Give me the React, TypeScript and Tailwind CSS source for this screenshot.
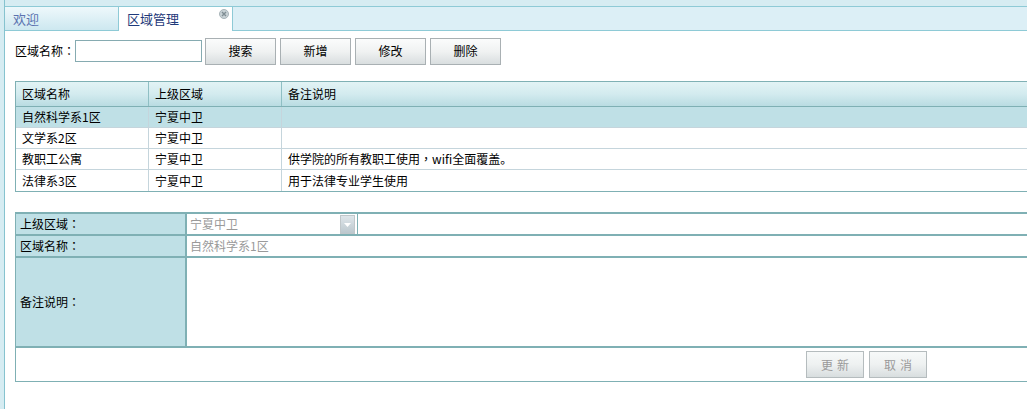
import React from "react";

const font = { fontFamily: '"Noto Sans CJK SC", "Noto Sans", sans-serif' };

function P({ c }: { c: string }) {
  return <span style={{ fontFamily: '"Noto Sans CJK TC", sans-serif' }}>{c}</span>;
}

function Btn({ label }: { label: string }) {
  return (
    <button className="w-[71px] h-[27px] border border-[#a9b0b3] bg-gradient-to-b from-[#fbfcfc] via-[#f0f2f2] to-[#d9dedf] text-[12px] text-black flex items-center justify-center">
      {label}
    </button>
  );
}

function DisBtn({ label }: { label: string }) {
  return (
    <button className="w-[58px] h-[27px] border border-[#b5bcbe] bg-gradient-to-b from-[#f7f9f9] via-[#eef1f1] to-[#d8dedf] text-[12px] text-[#9a9a9a] tracking-[4px] flex items-center justify-center pl-[4px]">
      {label}
    </button>
  );
}

const rows: { a: string; b: string; c: React.ReactNode; sel?: boolean }[] = [
  { a: "自然科学系1区", b: "宁夏中卫", c: "", sel: true },
  { a: "文学系2区", b: "宁夏中卫", c: "" },
  {
    a: "教职工公寓",
    b: "宁夏中卫",
    c: (
      <>
        供学院的所有教职工使用<P c="，" />wifi全面覆盖。
      </>
    ),
  },
  { a: "法律系3区", b: "宁夏中卫", c: "用于法律专业学生使用" },
];

export default function App() {
  return (
    <div className="w-[1027px] h-[409px] overflow-hidden flex bg-[#d6ecf2] text-[12px] text-black" style={font}>
      <div className="w-[4px] shrink-0 bg-[#d6ecf2]" />
      <div className="flex-1 flex flex-col border-l border-[#86c3cf] min-w-0">
        {/* tab bar */}
        <div className="h-[31px] pt-[6px] bg-[#d6ecf2] shrink-0">
          <div className="h-[25px] flex border-t border-[#8ecad6]">
            <div className="w-[114px] h-[24px] bg-gradient-to-b from-[#eef8fb] to-[#cde8f0] border-r border-b border-[#8ecad6] pl-[8px] flex items-center text-[13px] text-[#5b73b0]">
              欢迎
            </div>
            <div className="relative w-[114px] h-[24px] bg-white border-r border-[#8ecad6] pl-[8px] flex items-center text-[13px] text-[#1f3a7a]">
              区域管理
              <span className="absolute right-[3px] top-[2px] w-[10px] h-[10px] rounded-full bg-[#c9d2d6] border border-[#a8b4b9] flex items-center justify-center">
                <svg width="6" height="6" viewBox="0 0 6 6">
                  <path d="M1 1L5 5M5 1L1 5" stroke="#7f8d93" strokeWidth="1.4" />
                </svg>
              </span>
            </div>
            <div className="flex-1 h-[24px] bg-[#dceff6] border-b border-[#8ecad6]" />
          </div>
        </div>
        {/* content */}
        <div className="flex-1 bg-white pl-[10px] flex flex-col">
          <div className="mt-[7px] h-[26px] flex items-center">
            <span className="w-[60px] shrink-0 whitespace-nowrap">
              区域名称<P c="：" />
            </span>
            <input className="w-[127px] h-[22px] border border-[#86abb1] outline-none" />
            <div className="flex gap-[4px] ml-[3px]">
              <Btn label="搜索" />
              <Btn label="新增" />
              <Btn label="修改" />
              <Btn label="删除" />
            </div>
          </div>

          {/* table */}
          <div className="mt-[17px] w-[1030px] border border-[#7fb0b4]">
            <div className="h-[25px] flex border-b border-[#7fb0b4] bg-gradient-to-b from-[#e2f3f5] via-[#d3ebef] to-[#b9dce2]">
              <div className="w-[133px] border-r border-[#8fbfc4] pl-[6px] flex items-center">区域名称</div>
              <div className="w-[133px] border-r border-[#8fbfc4] pl-[6px] flex items-center">上级区域</div>
              <div className="flex-1 pl-[6px] flex items-center">备注说明</div>
            </div>
            {rows.map((r, i) => (
              <div
                key={i}
                className={`h-[21px] flex ${i < rows.length - 1 ? "border-b border-[#c5d5dc]" : ""} ${r.sel ? "bg-[#bfe0e6]" : "bg-white"}`}
              >
                <div className="w-[133px] border-r border-[#c5d5dc] pl-[6px] flex items-center">{r.a}</div>
                <div className="w-[133px] border-r border-[#c5d5dc] pl-[6px] flex items-center">{r.b}</div>
                <div className="flex-1 pl-[6px] flex items-center">{r.c}</div>
              </div>
            ))}
          </div>

          {/* form */}
          <div className="mt-[20px] w-[1030px] border-l border-b border-[#7fb0b4] border-t-2">
            <div className="flex h-[22px] border-b-2 border-[#7fb0b4]">
              <div className="w-[171px] bg-[#bfe0e6] border-r-2 border-[#7fb0b4] pl-[4px] flex items-center">
                上级区域<P c="：" />
              </div>
              <div className="w-[170px] flex items-center relative bg-white">
                <span className="pl-[3px] text-[#9a9a9a]">宁夏中卫</span>
                <span className="absolute right-[2px] top-[1px] w-[15px] h-[19px] border border-[#c0c7ca] bg-gradient-to-b from-[#dfe6ea] to-[#bcc8ce] flex items-center justify-center">
                  <svg width="7" height="4" viewBox="0 0 7 4">
                    <path d="M0 0H7L3.5 4Z" fill="#ffffff" />
                  </svg>
                </span>
              </div>
              <div className="flex-1 border-l border-[#7fb0b4] bg-white" />
            </div>
            <div className="flex h-[22px] border-b-2 border-[#7fb0b4]">
              <div className="w-[171px] bg-[#bfe0e6] border-r-2 border-[#7fb0b4] pl-[4px] flex items-center">
                区域名称<P c="：" />
              </div>
              <div className="flex-1 pl-[3px] flex items-center text-[#9a9a9a] bg-white">自然科学系1区</div>
            </div>
            <div className="flex h-[90px] border-b-2 border-[#7fb0b4]">
              <div className="w-[171px] bg-[#bfe0e6] border-r-2 border-[#7fb0b4] pl-[4px] flex items-center">
                备注说明<P c="：" />
              </div>
              <div className="flex-1 bg-white" />
            </div>
            <div className="h-[33px] flex items-center pl-[790px] gap-[5px]">
              <DisBtn label="更新" />
              <DisBtn label="取消" />
            </div>
          </div>
        </div>
      </div>
    </div>
  );
}
